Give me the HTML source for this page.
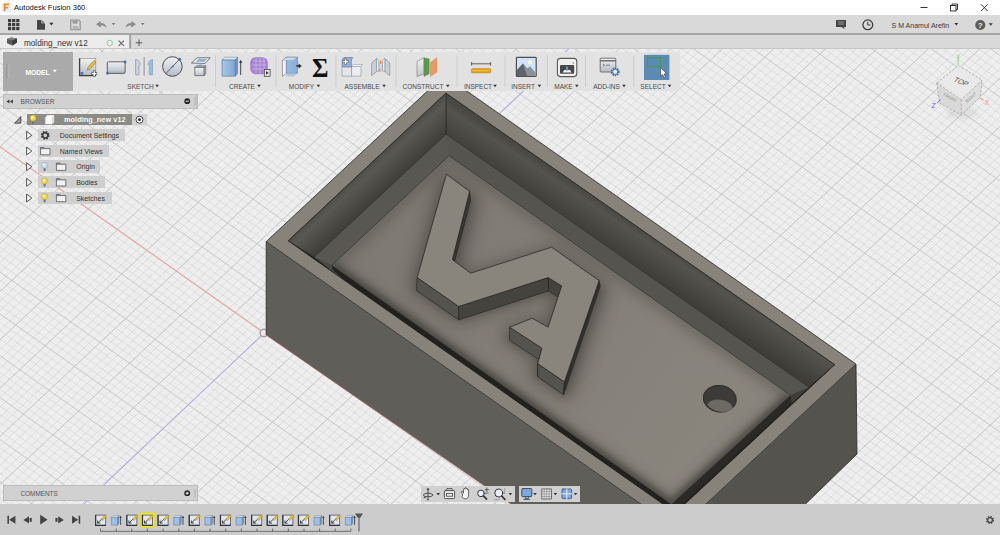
<!DOCTYPE html>
<html>
<head>
<meta charset="utf-8">
<title>Autodesk Fusion 360</title>
<style>
html,body{margin:0;padding:0;}
body{width:1000px;height:535px;overflow:hidden;position:relative;background:#ededed;font-family:"Liberation Sans",sans-serif;}
.abs{position:absolute;}
#titlebar{left:0;top:0;width:1000px;height:15px;background:#ffffff;}
#titletext{left:14px;top:2.400px;font-size:7.6px;color:#111;white-space:nowrap;line-height:11px;}
#qat{left:0;top:15px;width:1000px;height:19px;background:#d9d9d9;}
#qatline{left:0;top:33.4px;width:1000px;height:1.4px;background:#a6a6a6;}
#tabrow{left:0;top:34.8px;width:1000px;height:13.4px;background:#d9d9d9;}
#tabactive{left:0;top:34.8px;width:129px;height:13.4px;background:#ececec;}
#tabline{left:0;top:48px;width:1000px;height:1px;background:#c6c6c6;}
#tabtext{left:24px;top:38px;font-size:8.2px;color:#333;white-space:nowrap;line-height:11px;}
#canvas{left:0;top:49px;width:1000px;height:455px;overflow:hidden;}
#bottombar{left:0;top:504px;width:1000px;height:31px;background:#cccccc;}
.lbl{font-size:6.5px;color:#4a4a4a;white-space:nowrap;line-height:8px;transform:translateX(-50%);margin-top:0.8px;}
.tree{font-size:7px;color:#333;white-space:nowrap;line-height:13.400px;height:12.400px;background:#cfcfcf;margin-top:-0.2px;}
</style>
</head>
<body>
<!-- ===== canvas (grid + model) ===== -->
<div id="canvas" class="abs">
<svg class="abs" style="left:0;top:-49px" width="1000" height="535" viewBox="0 0 1000 535">
<defs>
  <pattern id="minor" width="1" height="1" patternUnits="userSpaceOnUse" patternTransform="matrix(5.1 -4.78 5.88 4.14 264 333)">
    <path d="M0 0H1M0 0V1" stroke="#cacaca" stroke-width="0.105" fill="none"/>
  </pattern>
  <pattern id="major" width="1" height="1" patternUnits="userSpaceOnUse" patternTransform="matrix(25.5 -23.9 29.4 20.7 264 333)">
    <path d="M0 0H1M0 0V1" stroke="#b9bcbc" stroke-width="0.027" fill="none"/>
  </pattern>
  <linearGradient id="farwall" gradientUnits="userSpaceOnUse" x1="640" y1="228" x2="620" y2="258">
    <stop offset="0" stop-color="#4a4843"/><stop offset="0.2" stop-color="#55534d"/><stop offset="1" stop-color="#3e3c38"/>
  </linearGradient>
  <linearGradient id="leftwall" gradientUnits="userSpaceOnUse" x1="360" y1="170" x2="385" y2="197">
    <stop offset="0" stop-color="#4b4944"/><stop offset="0.25" stop-color="#5a5852"/><stop offset="1" stop-color="#3a3935"/>
  </linearGradient>
  <linearGradient id="plateg" gradientUnits="userSpaceOnUse" x1="390" y1="210" x2="700" y2="428"><stop offset="0" stop-color="#7e7972"/><stop offset="0.5" stop-color="#837e77"/><stop offset="1" stop-color="#89847c"/></linearGradient>
  <filter id="blur6" x="-20%" y="-20%" width="140%" height="140%"><feGaussianBlur stdDeviation="6"/></filter>
  <filter id="blur8" x="-30%" y="-30%" width="160%" height="160%"><feGaussianBlur stdDeviation="8"/></filter>
  <filter id="blur5" x="-20%" y="-20%" width="140%" height="140%"><feGaussianBlur stdDeviation="4.5"/></filter>
  <filter id="blur3" x="-20%" y="-20%" width="140%" height="140%"><feGaussianBlur stdDeviation="3"/></filter>
  <clipPath id="plateclip"><polygon points="449.1,155.7 790.5,395.3 671.4,504.2 331.9,265.2"/></clipPath>
</defs>
<rect x="0" y="49" width="1000" height="455" fill="#eeeeee"/>
<rect x="0" y="49" width="1000" height="455" fill="url(#minor)"/>
<rect x="0" y="49" width="1000" height="455" fill="url(#major)"/>
<!-- axes -->
<line x1="0" y1="147" x2="264" y2="333" stroke="#ee9c96" stroke-width="1"/>
<line x1="84" y1="504" x2="264" y2="333" stroke="#a9a6ee" stroke-width="1"/>
<line x1="497" y1="116" x2="570" y2="48" stroke="#a9a6ee" stroke-width="1"/>
<circle cx="263.800" cy="333" r="3.800" fill="#e9e9e9" stroke="#a2a2a2" stroke-width="1.500"/>

<!-- ===== model ===== -->
<g stroke-linejoin="round">
<!-- outer faces -->
<polygon points="266.2,241.6 678,530 683,623 266.2,335" fill="#5f5e58"/>
<polygon points="678,530 856,364.1 857,454 683,623" fill="#54534d"/>
<line x1="266.2" y1="335" x2="511" y2="504" stroke="#9c5a50" stroke-width="0.700"/>
<!-- rim -->
<polygon points="444.3,75.3 856,364.1 678,530 266.2,241.6" fill="#87827a" stroke="#2b2a27" stroke-width="0.8"/>
<!-- inner base (floor / groove) -->
<polygon points="445.9,93.2 834.6,364.7 675.4,512.8 288.2,240.8" fill="#22211e" stroke="#2b2a27" stroke-width="0.8"/>
<!-- floor -->
<polygon points="446.1,134.4 808.7,387.6 675.4,512.8 314.4,257.3" fill="#5b5953"/>
<!-- groove shadows near side -->
<polygon points="331.9,265.2 671.4,504.2 790.5,395.3 808.7,387.6 834.6,364.7 675.4,512.8 288.2,240.8 314.4,257.3" fill="#22211e"/>
<polygon points="314.4,257.3 331.9,265.2 332.4,269.6 346,282 " fill="#4b4944"/>
<!-- inner walls -->
<polygon points="445.9,93.2 834.6,364.7 808.7,387.6 446.1,134.4" fill="url(#farwall)" stroke="#2b2a27" stroke-width="0.7"/>
<polygon points="445.9,93.2 446.1,134.4 314.4,257.3 288.2,240.8" fill="url(#leftwall)" stroke="#2b2a27" stroke-width="0.7"/>
<!-- floor strips (visible) -->
<polygon points="446.1,134.4 808.7,387.6 790.5,395.3 449.1,155.7" fill="#56544e"/>
<polygon points="446.1,134.4 449.1,155.7 331.9,265.2 314.4,257.3" fill="#595751"/>
<polygon points="790.5,395.3 808.7,387.6 792,403 791.3,403.6" fill="#3f3d39"/>
<!-- plate side (right/near-short) -->
<polygon points="790.5,395.3 791.3,403.6 676,510 671.4,504.2" fill="#2a2925"/>
<!-- plate top -->
<polygon points="449.1,155.7 790.5,395.3 671.4,504.2 331.9,265.2" fill="url(#plateg)" stroke="#2b2a27" stroke-width="0.7"/>
<g clip-path="url(#plateclip)">
  <!-- ambient occlusion -->
  <polygon points="449.1,155.7 790.5,395.3 671.4,504.2 331.9,265.2" fill="none" stroke="#55534e" stroke-width="12" filter="url(#blur6)" opacity="0.55"/>
  <path d="M331.9 265.2L671.4 504.2L790.5 395.3" fill="none" stroke="#3a3935" stroke-width="7" filter="url(#blur3)" opacity="0.75"/>
  <polygon points="446.4,174.2 469.6,191.4 452.4,259.7 470.7,273.2 551.6,247.2 599.1,280.6 564.4,381.9 537.7,363.6 541.9,348.2 509.6,327.2 532.1,318.2 548.1,327.2 561.7,285.9 548.2,277.6 458.7,306.4 417.2,277.6" fill="#3f3d39" stroke="#3f3d39" stroke-width="18" filter="url(#blur8)" opacity="0.5" transform="translate(1,8)"/>
  <polygon points="446.4,174.2 469.6,191.4 452.4,259.7 470.7,273.2 551.6,247.2 599.1,280.6 564.4,381.9 537.7,363.6 541.9,348.2 509.6,327.2 532.1,318.2 548.1,327.2 561.7,285.9 548.2,277.6 458.7,306.4 417.2,277.6" fill="#3f3d39" stroke="#3f3d39" stroke-width="5" filter="url(#blur3)" opacity="0.35" transform="translate(0,11)"/>
  
</g>
<!-- hole -->
<g>
  <ellipse cx="719.8" cy="398.7" rx="16.6" ry="13.4" fill="#3d3b37" stroke="#24231f" stroke-width="0.8" transform="rotate(8 719.8 398.7)"/>
  <clipPath id="holeclip"><ellipse cx="719.8" cy="398.7" rx="16.2" ry="13" transform="rotate(8 719.8 398.7)"/></clipPath>
  <ellipse cx="720" cy="406.8" rx="12.6" ry="7.2" fill="#6c6a63" clip-path="url(#holeclip)" transform="rotate(6 720 406)"/>
</g>
<!-- logo side faces -->
<g fill="#3e3c37" stroke="#23221f" stroke-width="0.6">
  <polygon points="417.2,277.6 458.7,306.4 458.7,319.9 416.5,290.4" fill="#55534d"/>
  <polygon points="458.7,306.4 548.2,277.6 548.6,290.9 458.7,319.9" fill="#45433e"/>
  <polygon points="548.2,277.6 561.7,285.9 561.7,299.2 548.6,290.9" fill="#45433e"/>
  <polygon points="509.6,327.2 541.9,348.2 541.9,361.4 509.6,340.3" fill="#55534d"/>
  <polygon points="541.9,348.2 537.7,363.6 537.7,376.8 541.9,361.4" fill="#3a3834"/>
  <polygon points="537.7,363.6 564.4,381.9 563.6,394.8 537.7,376.8" fill="#55534d"/>
  <polygon points="564.4,381.9 599.1,280.6 600.3,286 563.6,394.8" fill="#33312d"/>
  <polygon points="469.6,191.4 452.4,259.7 453.4,266 470.6,200.4" fill="#3a3834"/>
</g>
<!-- logo top -->
<polygon points="446.4,174.2 469.6,191.4 452.4,259.7 470.7,273.2 551.6,247.2 599.1,280.6 564.4,381.9 537.7,363.6 541.9,348.2 509.6,327.2 532.1,318.2 548.1,327.2 561.7,285.9 548.2,277.6 458.7,306.4 417.2,277.6" fill="#89847c" stroke="#23221f" stroke-width="0.7"/>
<!-- outer silhouette edges -->
<polyline points="266.2,241.6 266.2,335" fill="none" stroke="#2b2a27" stroke-width="0.8"/>
<polyline points="856,364.1 857,454 805.6,504" fill="none" stroke="#2b2a27" stroke-width="0.8"/>
</g>
</svg>
</div>

<!-- ===== chrome ===== -->
<div id="titlebar" class="abs"></div>
<div id="titletext" class="abs">Autodesk Fusion 360</div>
<div id="qat" class="abs"></div>
<div id="qatline" class="abs"></div>
<div id="tabrow" class="abs"></div>
<div id="tabactive" class="abs"></div>
<div id="tabline" class="abs"></div>
<div id="tabtext" class="abs">molding_new v12</div>
<div id="bottombar" class="abs"></div>

<!-- ===== ribbon ===== -->
<div class="abs" style="left:3px;top:51.5px;width:677px;height:39px;background:#e2e2e2;"></div>
<div class="abs" style="left:3px;top:51.5px;width:70px;height:39px;background:#aaaaaa;"></div>
<div class="abs" style="left:25.5px;top:68.8px;font-size:6.7px;font-weight:bold;color:#fff;line-height:8px;white-space:nowrap;">MODEL</div>
<div class="abs lbl" style="left:140.5px;top:82px;">SKETCH</div>
<div class="abs lbl" style="left:242px;top:82px;">CREATE</div>
<div class="abs lbl" style="left:301.5px;top:82px;">MODIFY</div>
<div class="abs lbl" style="left:362px;top:82px;">ASSEMBLE</div>
<div class="abs lbl" style="left:423px;top:82px;">CONSTRUCT</div>
<div class="abs lbl" style="left:478px;top:82px;">INSPECT</div>
<div class="abs lbl" style="left:523px;top:82px;">INSERT</div>
<div class="abs lbl" style="left:563.5px;top:82px;">MAKE</div>
<div class="abs lbl" style="left:606.5px;top:82px;">ADD-INS</div>
<div class="abs lbl" style="left:653px;top:82px;">SELECT</div>

<!-- ===== browser panel ===== -->
<div class="abs" style="left:3px;top:94.3px;width:194.5px;height:14.6px;background:#d1d1d1;border:1px solid #bdbdbd;box-sizing:border-box;"></div>
<div class="abs" style="left:20.5px;top:97.5px;font-size:6.6px;color:#555;line-height:8px;white-space:nowrap;">BROWSER</div>
<div class="abs" style="left:27px;top:114px;width:105px;height:11.400px;background:#8b8a84;"></div>
<div class="abs" style="left:64px;top:115px;font-size:7.4px;font-weight:bold;color:#fff;line-height:9px;white-space:nowrap;">molding_new v12</div>
<div class="abs tree" style="left:38px;top:129px;width:87px;"><span style="margin-left:21.800px">Document Settings</span></div>
<div class="abs tree" style="left:38px;top:145px;width:71px;"><span style="margin-left:21.800px">Named Views</span></div>
<div class="abs tree" style="left:38px;top:160.5px;width:62px;"><span style="margin-left:38.200px">Origin</span></div>
<div class="abs tree" style="left:38px;top:176px;width:67px;"><span style="margin-left:38.200px">Bodies</span></div>
<div class="abs tree" style="left:38px;top:192px;width:74px;"><span style="margin-left:38.200px">Sketches</span></div>

<!-- ===== comments ===== -->
<div class="abs" style="left:3px;top:485.4px;width:194.5px;height:15.6px;background:#d1d1d1;border:1px solid #bdbdbd;box-sizing:border-box;"></div>
<div class="abs" style="left:20.5px;top:489.5px;font-size:6.4px;color:#555;line-height:8px;white-space:nowrap;">COMMENTS</div>

<!-- ===== nav bar ===== -->
<div class="abs" style="left:421px;top:486px;width:94px;height:15.5px;background:#d0d0d0;"></div>
<div class="abs" style="left:519px;top:486px;width:61px;height:15.5px;background:#d0d0d0;"></div>

<!-- user -->
<div class="abs" style="left:891.6px;top:20.5px;font-size:7px;color:#3a3a3a;line-height:9px;white-space:nowrap;">S M Anamul Arefin</div>

<!-- ===== icon overlay ===== -->
<svg id="icons" class="abs" style="left:0;top:0" width="1000" height="535" viewBox="0 0 1000 535">

<!-- app icon -->
<rect x="2" y="2.5" width="9" height="10" rx="1.5" fill="#e4eef7"/>
<path d="M4.6 11V4.4h4.4M4.6 7.6h3.2" stroke="#f08a1d" stroke-width="1.7" fill="none"/>
<!-- window controls -->
<path d="M920.5 7.5h7" stroke="#222" stroke-width="0.9"/>
<rect x="950.5" y="5.5" width="5.5" height="5.5" fill="none" stroke="#222" stroke-width="0.9"/>
<path d="M952 5.5V4h5.5v5.5H956" fill="none" stroke="#222" stroke-width="0.9"/>
<path d="M981.100 4.400l6.600 6.600M987.700 4.400l-6.600 6.600" stroke="#222" stroke-width="0.900"/>
<!-- QAT: grid -->
<g fill="#3b3b3b">
<rect x="8" y="19" width="3.2" height="3.2"/><rect x="12.1" y="19" width="3.2" height="3.2"/><rect x="16.2" y="19" width="3.2" height="3.2"/>
<rect x="8" y="23" width="3.2" height="3.2"/><rect x="12.1" y="23" width="3.2" height="3.2"/><rect x="16.2" y="23" width="3.2" height="3.2"/>
<rect x="8" y="27" width="3.2" height="3.2"/><rect x="12.1" y="27" width="3.2" height="3.2"/><rect x="16.2" y="27" width="3.2" height="3.2"/>
</g>
<!-- file -->
<path d="M37 20h4.5l3.5 3.2V29.7H37z" fill="#454545"/>
<path d="M41.7 20v3h3.3" fill="none" stroke="#dadada" stroke-width="0.7"/>
<path d="M49.3 22.8h4.2l-2.1 2.6z" fill="#333"/>
<!-- save -->
<path d="M70.7 20.2h8.3l1.2 1.2v8.2h-9.5z" fill="none" stroke="#9a9a9a" stroke-width="1.3"/>
<rect x="72.6" y="20.4" width="5" height="3.2" fill="#9a9a9a"/>
<rect x="72.8" y="26" width="5.4" height="3.4" fill="#b5b5b5"/>
<!-- undo / redo -->
<path d="M96 24.3l4.6-3.3v2c3.5 0 5.6 1.6 5.9 5-1.4-1.9-3-2.5-5.9-2.5v2.1z" fill="#8a8a8a"/>
<path d="M111.7 22.9h3.6l-1.8 2.3z" fill="#777"/>
<path d="M136 24.3l-4.6-3.3v2c-3.5 0-5.6 1.6-5.9 5 1.4-1.9 3-2.5 5.9-2.5v2.1z" fill="#8a8a8a"/>
<path d="M140.9 22.9h3.6l-1.8 2.3z" fill="#777"/>
<!-- chat -->
<path d="M836 20h10v7h-2.2l1 2.2-3.4-2.2H836z" fill="#444"/>
<path d="M838 22h6M838 24h6" stroke="#bbb" stroke-width="0.7"/>
<!-- clock -->
<circle cx="867.800" cy="24.800" r="4.900" fill="none" stroke="#3d3d3d" stroke-width="1.300"/>
<path d="M867.800 21.800v3.200h2.600" fill="none" stroke="#3d3d3d" stroke-width="1"/>
<path d="M954.3 23h3.9l-1.95 2.5z" fill="#333"/>
<!-- help -->
<circle cx="980.300" cy="25" r="5.100" fill="#5c5c5c"/>
<text x="980.300" y="27.900" font-family="Liberation Sans" font-weight="bold" font-size="8" fill="#f2f2f2" text-anchor="middle">?</text>
<path d="M988.8 23.2h3.9l-1.95 2.5z" fill="#333"/>
<!-- tab: cube icon -->
<path d="M7 39l4.2-1.6 5.8 1.2v4l-4.6 2.8L7 43.2z" fill="#5a5a5a"/>
<path d="M7 39l5.4 1.5 4.6-1.9-5.8-1.2z" fill="#7d7d7d"/>
<path d="M12.4 40.5v4.9l4.6-2.8v-4z" fill="#3c3c3c"/>
<circle cx="109.700" cy="43" r="2.800" fill="none" stroke="#8cc9a0" stroke-width="0.900"/>
<path d="M118.7 40.6l5.2 5.2M123.9 40.6l-5.2 5.2" stroke="#666" stroke-width="1.1"/>
<path d="M130.2 34.5v14" stroke="#9c9c9c" stroke-width="1.8"/>
<path d="M135.7 42.8h6.6M139 39.5v6.6" stroke="#555" stroke-width="1"/>

<defs>
<linearGradient id="gSk" x1="0" y1="0" x2="0" y2="1"><stop offset="0" stop-color="#f1f1f1"/><stop offset="1" stop-color="#b4bcc8"/></linearGradient>
<linearGradient id="gBlue" x1="0" y1="0" x2="1" y2="0"><stop offset="0" stop-color="#a9c8e8"/><stop offset="1" stop-color="#7fa6d2"/></linearGradient>
<linearGradient id="gGray" x1="0" y1="0" x2="0" y2="1"><stop offset="0" stop-color="#f4f4f4"/><stop offset="1" stop-color="#bfc4cb"/></linearGradient>
</defs>
<!-- MODEL grip + arrow -->
<path d="M6.900 64v14.500" stroke="#8f8f8f" stroke-width="0.700"/><path d="M9.100 64v14.500" stroke="#c2c2c2" stroke-width="0.700"/>
<path d="M52.800 69.800h4l-2 2.600z" fill="#fff"/>
<!-- separators -->
<path d="M215.5 55.500v31.500M276 55.500v31.500M336 55.500v31.500M396 55.500v31.500M457 55.500v31.500M505 55.500v31.500M547.300 55.500v31.500M585.500 55.500v31.500M633.800 55.500v31.500" stroke="#cdcdcd" stroke-width="1"/>
<!-- label arrows -->
<g fill="#333">
<path d="M155.3 84.8h3.6l-1.8 2.4z"/><path d="M257.2 84.8h3.6l-1.8 2.4z"/><path d="M316.6 84.8h3.6l-1.8 2.4z"/><path d="M382.3 84.8h3.6l-1.8 2.4z"/>
<path d="M446 84.8h3.6l-1.8 2.4z"/><path d="M493.2 84.8h3.6l-1.8 2.4z"/><path d="M537.6 84.8h3.6l-1.8 2.4z"/><path d="M575 84.8h3.6l-1.8 2.4z"/>
<path d="M622.2 84.8h3.6l-1.8 2.4z"/><path d="M667.7 84.8h3.6l-1.8 2.4z"/>
</g>
<!-- 1 create sketch -->
<rect x="79.6" y="58.6" width="16.2" height="16.6" fill="url(#gSk)" stroke="#8a8a8a" stroke-width="0.6"/>
<path d="M79.6 58.4V75.6H96" fill="none" stroke="#3e3e3e" stroke-width="1.3"/>
<rect x="80.6" y="72" width="2.6" height="2.6" fill="#4a76ae"/>
<path d="M88 67.5l6-7 2 1.7-6 7-2.6 0.9z" fill="#f2c230" stroke="#6b5a2a" stroke-width="0.5"/>
<path d="M94.2 70.6v6M91.2 73.6h6" stroke="#555" stroke-width="2.6"/>
<path d="M94.2 71.2v4.8M91.8 73.6h4.8" stroke="#fff" stroke-width="1.3"/>
<!-- 2 rectangle -->
<rect x="107.3" y="61.8" width="17.8" height="11.6" rx="1" fill="url(#gSk)" stroke="#555" stroke-width="0.9"/>
<path d="M108.5 72h15.5" stroke="#7d95b8" stroke-width="0.5" stroke-dasharray="1 0.6"/>
<circle cx="125" cy="62" r="1.4" fill="#3f6ea9"/><circle cx="107.5" cy="73.3" r="1.4" fill="#3f6ea9"/>
<!-- 3 mirror -->
<path d="M144.1 57v18.8" stroke="#7a7a7a" stroke-width="0.8"/>
<path d="M135.6 59.4c3 .4 4.6 2.8 4.6 5.2l-1.2 1.2v9h-3.4z" fill="#cdd3db" stroke="#8a929d" stroke-width="0.700"/>
<path d="M152.6 59.4c-3 .4-4.6 2.8-4.6 5.2l1.2 1.2v9h3.4z" fill="#9dbbe0" stroke="#7f9cc2" stroke-width="0.6"/>
<!-- 4 circle -->
<circle cx="172.4" cy="66.5" r="9.8" fill="url(#gSk)" stroke="#4a4a4a" stroke-width="1"/>
<path d="M166 73.4L179.4 59.4" stroke="#444" stroke-width="0.8"/>
<circle cx="179.6" cy="59.3" r="1.5" fill="#3f6ea9"/><circle cx="172.6" cy="66.4" r="1" fill="#3f6ea9"/>
<!-- 5 project -->
<path d="M191.4 63l5.8-5.2h13l-5.2 5.7z" fill="#f2f2f2" stroke="#555" stroke-width="0.8"/>
<path d="M195.6 61.8l3-2.8h8.4l-2.8 3z" fill="#8db1dc"/>
<path d="M200.3 63.5v3" stroke="#8db1dc" stroke-width="3" opacity="0.6"/>
<path d="M194.8 67.4l2-1.6h9l-1.6 1.6z" fill="#a9c5e6" stroke="#555" stroke-width="0.6"/>
<path d="M194.8 67.4h9.4v8.2h-9.4z" fill="url(#gGray)" stroke="#555" stroke-width="0.7"/>
<path d="M204.2 67.4l1.6-1.6v8l-1.6 1.8z" fill="#b7bcc4" stroke="#555" stroke-width="0.6"/>
<!-- 6 extrude -->
<path d="M222 60l2.4-2.8h13.2l-2.2 2.8z" fill="#dfe9f4" stroke="#6a7a8e" stroke-width="0.5"/>
<path d="M222 60h13.4v16.2H222z" fill="url(#gBlue)" stroke="#5d6f86" stroke-width="0.6"/>
<path d="M235.4 60l2.2-2.8v16l-2.2 3z" fill="#6e95c4" stroke="#5d6f86" stroke-width="0.5"/>
<path d="M240.7 75V61.5" stroke="#333" stroke-width="0.9"/><path d="M239 62.8l1.7-3 1.7 3z" fill="#333"/>
<!-- 7 form -->
<rect x="250.2" y="57.2" width="17.6" height="17" rx="5.5" fill="#a383cf"/>
<path d="M253 61h12M252 65h14M252 69h14M256 58v15M260 58v16M264 58v15" stroke="#c9b5e6" stroke-width="0.9"/>
<rect x="264.3" y="69.5" width="5.8" height="6.8" fill="#e8e8e8" stroke="#444" stroke-width="0.8"/>
<path d="M266 71l2.6 1.9-2.6 1.9z" fill="#333"/>
<!-- 8 press pull -->
<path d="M282.4 60.5l4-3.3v16l-4 3.3z" fill="#f3f3f3" stroke="#666" stroke-width="0.6"/>
<path d="M286.4 57.2h11v16h-11z" fill="url(#gBlue)" stroke="#5d6f86" stroke-width="0.6"/>
<path d="M282.4 60.5l4-3.3h11l-3.6 3.3z" fill="#dfe9f4" stroke="#6a7a8e" stroke-width="0.4" opacity="0.7"/>
<path d="M286.6 60.5v16h7.2l3.6-3.3v-16l-3.6 3.3z" fill="#8fb3dd" opacity="0.6"/>
<path d="M296.4 65.9h3" stroke="#2c2c2c" stroke-width="1.6"/><path d="M298.6 63.4l3.2 2.5-3.2 2.5z" fill="#2c2c2c"/>
<!-- 9 sigma -->
<text x="320.200" y="77" font-family="Liberation Serif" font-weight="bold" font-size="28" fill="#111" text-anchor="middle" textLength="16.500" lengthAdjust="spacingAndGlyphs">Σ</text>
<!-- 10 new component -->
<path d="M342 66.5h9.6v9.6H342z" fill="#e4e6ea" stroke="#8a8f98" stroke-width="0.6"/>
<path d="M351.6 66.5h9.4v9.6h-9.4z" fill="#eceef1" stroke="#8a8f98" stroke-width="0.6"/>
<path d="M351.6 66.5l1.6-2h9.2l-1.4 2z" fill="#f6f6f6" stroke="#8a8f98" stroke-width="0.5"/>
<path d="M342.2 59.6l1.6-2h9l-1.4 2v7.4h-9.2z" fill="#8fb3dd" stroke="#5d6f86" stroke-width="0.6"/>
<path d="M345.6 58.6v6M342.6 61.6h6" stroke="#666" stroke-width="2.5"/><path d="M345.6 59.2v4.8M343.2 61.6h4.8" stroke="#fff" stroke-width="1.3"/>
<!-- 11 joint -->
<path d="M371.6 63l5-4.4v13l-5 4z" fill="#c9ced6" stroke="#7c838d" stroke-width="0.6"/>
<path d="M376.6 58.6l2.2 1.4v11l-2.2 0.6z" fill="#eef0f2" stroke="#7c838d" stroke-width="0.5"/>
<path d="M389.8 63l-5-4.4v13l5 4z" fill="#c9ced6" stroke="#7c838d" stroke-width="0.6"/>
<path d="M384.8 58.6l-2.2 1.4v11l2.2 0.6z" fill="#eef0f2" stroke="#7c838d" stroke-width="0.5"/>
<path d="M379.4 62.2h2.6v9h-2.6z" fill="#dfe2e6" stroke="#8a8f98" stroke-width="0.4"/>
<path d="M380.7 60.4v3.4M379.6 68.6v3" stroke="#ee8a2e" stroke-width="1.2"/>
<!-- 12 construct -->
<path d="M417 61.4l7-3.6v16l-7 2.8z" fill="url(#gGray)" stroke="#777" stroke-width="0.6"/>
<path d="M424 57.8l5.2 1.2v14.8l-5.2 2.6z" fill="#5b9a4a" stroke="#4b7a3f" stroke-width="0.4"/>
<path d="M430.4 62.6l6.4-4.8v14.4l-6.4 4.4z" fill="#ea9a62" stroke="#c47a44" stroke-width="0.4"/>
<!-- 13 inspect -->
<path d="M471.6 63.8h19M471.6 62v3.6M490.6 62v3.6" stroke="#555" stroke-width="0.9" fill="none"/>
<rect x="471.4" y="68.6" width="19.4" height="4.3" rx="1" fill="#e7a61f" stroke="#b27c12" stroke-width="0.5"/>
<path d="M473 70.6h16" stroke="#f8dc7a" stroke-width="0.8" stroke-dasharray="0.8 0.8"/>
<!-- 14 insert -->
<rect x="516.4" y="57.3" width="19.8" height="19.2" rx="0.8" fill="#cfe4f6" stroke="#4f4f4f" stroke-width="1.2"/>
<circle cx="530" cy="62.2" r="2" fill="#fdf6cf"/>
<path d="M517 76v-6l6-6.4 4.4 5 2.6-2.4 5.6 6.6v3.2z" fill="#8b9099"/>
<path d="M517 76v-6l6-6.4 4 12.4z" fill="#5f646c"/>
<!-- 15 make -->
<rect x="557.4" y="58.4" width="19.4" height="18.2" rx="3" fill="#efefef" stroke="#5a5a5a" stroke-width="1.1"/>
<rect x="560" y="65" width="14.2" height="8.8" rx="1" fill="#484848"/>
<path d="M562.6 72.6l1.6-2.6h5.8l1.6 2.6z" fill="#f0f0f0"/>
<path d="M566 66.4h2v3l1 0-2 1.6-2-1.6 1 0z" fill="#5f96d6"/>
<circle cx="573.3" cy="63" r="0.8" fill="#4caa3e"/>
<!-- 16 add-ins -->
<rect x="600.2" y="58.2" width="15.6" height="13.8" rx="0.8" fill="url(#gSk)" stroke="#666" stroke-width="0.9"/>
<path d="M600.2 60.8h15.6" stroke="#666" stroke-width="1.4"/>
<path d="M603 64l1.6 1.2-1.6 1.2M606 65.2h4" stroke="#555" stroke-width="0.7" fill="none"/>
<circle cx="615.2" cy="71.8" r="3.6" fill="#e9eef5" stroke="#3b6ca6" stroke-width="1.7" stroke-dasharray="1.5 0.8"/>
<circle cx="615.2" cy="71.8" r="2.6" fill="none" stroke="#3b6ca6" stroke-width="1"/>
<!-- 17 select -->
<rect x="644" y="54.8" width="25.4" height="25.2" fill="#5b8ab5"/>
<rect x="647.6" y="57.8" width="13" height="8.6" fill="none" stroke="#4c9a3a" stroke-width="1"/>
<path d="M660.6 67.6v8.8l2-1.8 1.5 3.2 1.4-.7-1.5-3.1 2.7-.2z" fill="#fff" stroke="#333" stroke-width="0.6"/>
<defs><filter id="vcblur" x="-50%" y="-50%" width="200%" height="200%"><feGaussianBlur stdDeviation="2.5"/></filter></defs>
<path d="M9.4 99.4l-2.8 2 2.8 2zM12.8 99.4l-2.8 2 2.8 2z" fill="#333"/>
<circle cx="187.2" cy="101.2" r="2.9" fill="#222"/><path d="M185.6 101.2h3.2" stroke="#fff" stroke-width="0.9"/>
<path d="M195 97v8.6" stroke="#aaa" stroke-width="0.8"/><path d="M196.5 94.5v13.5" stroke="#bdbdbd" stroke-width="0.8"/>
<circle cx="187.2" cy="493.2" r="2.9" fill="#222"/><path d="M185.6 493.2h3.2M187.2 491.6v3.2" stroke="#fff" stroke-width="0.9"/>
<path d="M195 489v8.6" stroke="#aaa" stroke-width="0.8"/>
<path d="M14.6 123.2h6.2v-6.6z" fill="#9a9a9a" stroke="#333" stroke-width="0.8" stroke-linejoin="round"/>
<rect x="132" y="114" width="15.200" height="11.400" fill="#d2d2d2"/>
<path d="M28 115.400h104M28 117.400h104M28 119.400h104M28 121.400h104M28 123.400h104" stroke="#9c9b96" stroke-width="0.6" stroke-dasharray="0.8 1.2" opacity="0.6"/>
<g transform="translate(33,119.5)"><circle cx="0" cy="-1.4" r="3" fill="#f5dc3c" stroke="#b89a20" stroke-width="0.5"/><circle cx="-0.8" cy="-2.2" r="1.2" fill="#fff" opacity="0.75"/><path d="M-1.4 1.5h2.8v1.6h-2.8z" fill="#8a8a8a"/><path d="M-0.9 3.1h1.8v1h-1.8z" fill="#555"/></g>
<g><path d="M45.4 117.4l2-1.8h6.6v6.6l-2 1.8h-6.6z" fill="#fafafa" stroke="#e5e5e5" stroke-width="0.5"/><path d="M52 117.4l2-1.8v6.6l-2 1.8z" fill="#d9d9d9"/><path d="M45.4 117.4h6.6l2-1.8h-6.6z" fill="#fff"/></g>
<circle cx="139.5" cy="119.7" r="3.5" fill="#fff" stroke="#333" stroke-width="0.9"/><circle cx="139.5" cy="119.7" r="1.4" fill="#222"/>
<path d="M26.6 131.3l5.2 4-5.2 4z" fill="#f3f3f3" stroke="#444" stroke-width="0.9" stroke-linejoin="round"/>
<path d="M26.6 147l5.2 4-5.2 4z" fill="#f3f3f3" stroke="#444" stroke-width="0.9" stroke-linejoin="round"/>
<path d="M26.6 162.7l5.2 4-5.2 4z" fill="#f3f3f3" stroke="#444" stroke-width="0.9" stroke-linejoin="round"/>
<path d="M26.6 178.3l5.2 4-5.2 4z" fill="#f3f3f3" stroke="#444" stroke-width="0.9" stroke-linejoin="round"/>
<path d="M26.6 194l5.2 4-5.2 4z" fill="#f3f3f3" stroke="#444" stroke-width="0.9" stroke-linejoin="round"/>
<g transform="translate(45.2,135.3)"><circle r="3.3" fill="none" stroke="#3c3c3c" stroke-width="2.2" stroke-dasharray="1.5 1.09"/><circle r="2.6" fill="none" stroke="#3c3c3c" stroke-width="1.5"/><circle r="1.2" fill="#cfcfcf"/></g>
<g transform="translate(40.6,146.4)"><path d="M0 1.2h3.4l0.8 1h5.2v6.2H0z" fill="#f1f1f1" stroke="#555" stroke-width="0.8"/><path d="M0 1.2h3.4l0.8 1.2H0z" fill="#8aa6cc" stroke="#555" stroke-width="0.5"/></g>
<g transform="translate(44.6,166.8)"><circle cx="0" cy="-1.4" r="3" fill="#c8def5" stroke="#7f9cc2" stroke-width="0.5"/><circle cx="-0.8" cy="-2.2" r="1.2" fill="#fff" opacity="0.75"/><path d="M-1.4 1.5h2.8v1.6h-2.8z" fill="#8a8a8a"/><path d="M-0.9 3.1h1.8v1h-1.8z" fill="#555"/></g>
<g transform="translate(56.4,162.0)"><path d="M0 1.2h3.4l0.8 1h5.2v6.2H0z" fill="#f1f1f1" stroke="#555" stroke-width="0.8"/><path d="M0 1.2h3.4l0.8 1.2H0z" fill="#8aa6cc" stroke="#555" stroke-width="0.5"/></g>
<g transform="translate(44.6,182.4)"><circle cx="0" cy="-1.4" r="3" fill="#f5dc3c" stroke="#b89a20" stroke-width="0.5"/><circle cx="-0.8" cy="-2.2" r="1.2" fill="#fff" opacity="0.75"/><path d="M-1.4 1.5h2.8v1.6h-2.8z" fill="#8a8a8a"/><path d="M-0.9 3.1h1.8v1h-1.8z" fill="#555"/></g>
<g transform="translate(56.4,177.6)"><path d="M0 1.2h3.4l0.8 1h5.2v6.2H0z" fill="#f1f1f1" stroke="#555" stroke-width="0.8"/><path d="M0 1.2h3.4l0.8 1.2H0z" fill="#8aa6cc" stroke="#555" stroke-width="0.5"/></g>
<g transform="translate(44.6,198.1)"><circle cx="0" cy="-1.4" r="3" fill="#f5dc3c" stroke="#b89a20" stroke-width="0.5"/><circle cx="-0.8" cy="-2.2" r="1.2" fill="#fff" opacity="0.75"/><path d="M-1.4 1.5h2.8v1.6h-2.8z" fill="#8a8a8a"/><path d="M-0.9 3.1h1.8v1h-1.8z" fill="#555"/></g>
<g transform="translate(56.4,193.3)"><path d="M0 1.2h3.4l0.8 1h5.2v6.2H0z" fill="#f1f1f1" stroke="#555" stroke-width="0.8"/><path d="M0 1.2h3.4l0.8 1.2H0z" fill="#8aa6cc" stroke="#555" stroke-width="0.5"/></g>
<g fill="#444"><path d="M7.4 515.8h1.6v8h-1.6zM15.4 515.8v8l-6.2-4z"/><path d="M29 516.2v7.4l-5.6-3.7zM29.6 518h2.2v3.8h-2.2z"/><path d="M40.2 514.8v9.8l7.4-4.9z"/><path d="M58.2 516.2v7.4l5.6-3.7zM57.6 518h-2.2v3.8h2.2z"/><path d="M78.6 515.8h1.6v8h-1.6zM72 515.8v8l6.2-4z"/></g>
<rect x="140.4" y="512.8" width="14.4" height="14.4" fill="#f1ea3a" stroke="#dcd51a" stroke-width="0.6"/>
<g transform="translate(95.1,514.7)"><rect x="0.4" y="0.4" width="10.200" height="10.200" fill="#dfe7f2" stroke="#555" stroke-width="0.800"/><path d="M0.6 0.2v10.4h10.2" fill="none" stroke="#333" stroke-width="1.2"/><path d="M2.6 8.4l4.6-4.6M2.6 8.4v-2.6M2.6 8.4h2.6" stroke="#333" stroke-width="0.9" fill="none"/><path d="M6 4.6l4.2-4.4 1.4 1.3-4.2 4.4z" fill="#f2c230" stroke="#8a6d1e" stroke-width="0.4"/></g>
<g transform="translate(110.7,514.7)"><path d="M0.6 2.6l1.6-1.8h6l-1.4 1.8z" fill="#e4edf7" stroke="#6a7a8e" stroke-width="0.4"/><path d="M0.6 2.6h6.2v7.8h-6.2z" fill="#9fc0e6" stroke="#5d6f86" stroke-width="0.5"/><path d="M6.8 2.6l1.4-1.8v7.6l-1.4 2z" fill="#7499c8" stroke="#5d6f86" stroke-width="0.4"/><path d="M9.9 10.2v-7.4" stroke="#333" stroke-width="0.8"/><path d="M8.7 3.4l1.2-2.4 1.2 2.4z" fill="#333"/></g>
<g transform="translate(126.3,514.7)"><rect x="0.4" y="0.4" width="10.200" height="10.200" fill="#dfe7f2" stroke="#555" stroke-width="0.800"/><path d="M0.6 0.2v10.4h10.2" fill="none" stroke="#333" stroke-width="1.2"/><path d="M2.6 8.4l4.6-4.6M2.6 8.4v-2.6M2.6 8.4h2.6" stroke="#333" stroke-width="0.9" fill="none"/><path d="M6 4.6l4.2-4.4 1.4 1.3-4.2 4.4z" fill="#f2c230" stroke="#8a6d1e" stroke-width="0.4"/></g>
<g transform="translate(141.9,514.7)"><rect x="0.4" y="0.4" width="10.200" height="10.200" fill="#dfe7f2" stroke="#555" stroke-width="0.800"/><path d="M0.6 0.2v10.4h10.2" fill="none" stroke="#333" stroke-width="1.2"/><path d="M2.6 8.4l4.6-4.6M2.6 8.4v-2.6M2.6 8.4h2.6" stroke="#333" stroke-width="0.9" fill="none"/><path d="M6 4.6l4.2-4.4 1.4 1.3-4.2 4.4z" fill="#f2c230" stroke="#8a6d1e" stroke-width="0.4"/></g>
<g transform="translate(157.5,514.7)"><rect x="0.4" y="0.4" width="10.200" height="10.200" fill="#dfe7f2" stroke="#555" stroke-width="0.800"/><path d="M0.6 0.2v10.4h10.2" fill="none" stroke="#333" stroke-width="1.2"/><path d="M2.6 8.4l4.6-4.6M2.6 8.4v-2.6M2.6 8.4h2.6" stroke="#333" stroke-width="0.9" fill="none"/><path d="M6 4.6l4.2-4.4 1.4 1.3-4.2 4.4z" fill="#f2c230" stroke="#8a6d1e" stroke-width="0.4"/></g>
<g transform="translate(173.1,514.7)"><path d="M0.6 2.6l1.6-1.8h6l-1.4 1.8z" fill="#e4edf7" stroke="#6a7a8e" stroke-width="0.4"/><path d="M0.6 2.6h6.2v7.8h-6.2z" fill="#9fc0e6" stroke="#5d6f86" stroke-width="0.5"/><path d="M6.8 2.6l1.4-1.8v7.6l-1.4 2z" fill="#7499c8" stroke="#5d6f86" stroke-width="0.4"/><path d="M9.9 10.2v-7.4" stroke="#333" stroke-width="0.8"/><path d="M8.7 3.4l1.2-2.4 1.2 2.4z" fill="#333"/></g>
<g transform="translate(188.7,514.7)"><rect x="0.4" y="0.4" width="10.200" height="10.200" fill="#dfe7f2" stroke="#555" stroke-width="0.800"/><path d="M0.6 0.2v10.4h10.2" fill="none" stroke="#333" stroke-width="1.2"/><path d="M2.6 8.4l4.6-4.6M2.6 8.4v-2.6M2.6 8.4h2.6" stroke="#333" stroke-width="0.9" fill="none"/><path d="M6 4.6l4.2-4.4 1.4 1.3-4.2 4.4z" fill="#f2c230" stroke="#8a6d1e" stroke-width="0.4"/></g>
<g transform="translate(204.3,514.7)"><path d="M0.6 2.6l1.6-1.8h6l-1.4 1.8z" fill="#e4edf7" stroke="#6a7a8e" stroke-width="0.4"/><path d="M0.6 2.6h6.2v7.8h-6.2z" fill="#9fc0e6" stroke="#5d6f86" stroke-width="0.5"/><path d="M6.8 2.6l1.4-1.8v7.6l-1.4 2z" fill="#7499c8" stroke="#5d6f86" stroke-width="0.4"/><path d="M9.9 10.2v-7.4" stroke="#333" stroke-width="0.8"/><path d="M8.7 3.4l1.2-2.4 1.2 2.4z" fill="#333"/></g>
<g transform="translate(219.9,514.7)"><rect x="0.4" y="0.4" width="10.200" height="10.200" fill="#dfe7f2" stroke="#555" stroke-width="0.800"/><path d="M0.6 0.2v10.4h10.2" fill="none" stroke="#333" stroke-width="1.2"/><path d="M2.6 8.4l4.6-4.6M2.6 8.4v-2.6M2.6 8.4h2.6" stroke="#333" stroke-width="0.9" fill="none"/><path d="M6 4.6l4.2-4.4 1.4 1.3-4.2 4.4z" fill="#f2c230" stroke="#8a6d1e" stroke-width="0.4"/></g>
<g transform="translate(235.5,514.7)"><path d="M0.6 2.6l1.6-1.8h6l-1.4 1.8z" fill="#e4edf7" stroke="#6a7a8e" stroke-width="0.4"/><path d="M0.6 2.6h6.2v7.8h-6.2z" fill="#9fc0e6" stroke="#5d6f86" stroke-width="0.5"/><path d="M6.8 2.6l1.4-1.8v7.6l-1.4 2z" fill="#7499c8" stroke="#5d6f86" stroke-width="0.4"/><path d="M9.9 10.2v-7.4" stroke="#333" stroke-width="0.8"/><path d="M8.7 3.4l1.2-2.4 1.2 2.4z" fill="#333"/></g>
<g transform="translate(251.1,514.7)"><rect x="0.4" y="0.4" width="10.200" height="10.200" fill="#dfe7f2" stroke="#555" stroke-width="0.800"/><path d="M0.6 0.2v10.4h10.2" fill="none" stroke="#333" stroke-width="1.2"/><path d="M2.6 8.4l4.6-4.6M2.6 8.4v-2.6M2.6 8.4h2.6" stroke="#333" stroke-width="0.9" fill="none"/><path d="M6 4.6l4.2-4.4 1.4 1.3-4.2 4.4z" fill="#f2c230" stroke="#8a6d1e" stroke-width="0.4"/></g>
<g transform="translate(266.7,514.7)"><rect x="0.4" y="0.4" width="10.200" height="10.200" fill="#dfe7f2" stroke="#555" stroke-width="0.800"/><path d="M0.6 0.2v10.4h10.2" fill="none" stroke="#333" stroke-width="1.2"/><path d="M2.6 8.4l4.6-4.6M2.6 8.4v-2.6M2.6 8.4h2.6" stroke="#333" stroke-width="0.9" fill="none"/><path d="M6 4.6l4.2-4.4 1.4 1.3-4.2 4.4z" fill="#f2c230" stroke="#8a6d1e" stroke-width="0.4"/></g>
<g transform="translate(282.3,514.7)"><rect x="0.4" y="0.4" width="10.200" height="10.200" fill="#dfe7f2" stroke="#555" stroke-width="0.800"/><path d="M0.6 0.2v10.4h10.2" fill="none" stroke="#333" stroke-width="1.2"/><path d="M2.6 8.4l4.6-4.6M2.6 8.4v-2.6M2.6 8.4h2.6" stroke="#333" stroke-width="0.9" fill="none"/><path d="M6 4.6l4.2-4.4 1.4 1.3-4.2 4.4z" fill="#f2c230" stroke="#8a6d1e" stroke-width="0.4"/></g>
<g transform="translate(297.9,514.7)"><rect x="0.4" y="0.4" width="10.200" height="10.200" fill="#dfe7f2" stroke="#555" stroke-width="0.800"/><path d="M0.6 0.2v10.4h10.2" fill="none" stroke="#333" stroke-width="1.2"/><path d="M2.6 8.4l4.6-4.6M2.6 8.4v-2.6M2.6 8.4h2.6" stroke="#333" stroke-width="0.9" fill="none"/><path d="M6 4.6l4.2-4.4 1.4 1.3-4.2 4.4z" fill="#f2c230" stroke="#8a6d1e" stroke-width="0.4"/></g>
<g transform="translate(313.5,514.7)"><path d="M0.6 2.6l1.6-1.8h6l-1.4 1.8z" fill="#e4edf7" stroke="#6a7a8e" stroke-width="0.4"/><path d="M0.6 2.6h6.2v7.8h-6.2z" fill="#9fc0e6" stroke="#5d6f86" stroke-width="0.5"/><path d="M6.8 2.6l1.4-1.8v7.6l-1.4 2z" fill="#7499c8" stroke="#5d6f86" stroke-width="0.4"/><path d="M9.9 10.2v-7.4" stroke="#333" stroke-width="0.8"/><path d="M8.7 3.4l1.2-2.4 1.2 2.4z" fill="#333"/></g>
<g transform="translate(329.1,514.7)"><rect x="0.4" y="0.4" width="10.200" height="10.200" fill="#dfe7f2" stroke="#555" stroke-width="0.800"/><path d="M0.6 0.2v10.4h10.2" fill="none" stroke="#333" stroke-width="1.2"/><path d="M2.6 8.4l4.6-4.6M2.6 8.4v-2.6M2.6 8.4h2.6" stroke="#333" stroke-width="0.9" fill="none"/><path d="M6 4.6l4.2-4.4 1.4 1.3-4.2 4.4z" fill="#f2c230" stroke="#8a6d1e" stroke-width="0.4"/></g>
<g transform="translate(344.7,514.7)"><path d="M0.6 2.6l1.6-1.8h6l-1.4 1.8z" fill="#e4edf7" stroke="#6a7a8e" stroke-width="0.4"/><path d="M0.6 2.6h6.2v7.8h-6.2z" fill="#9fc0e6" stroke="#5d6f86" stroke-width="0.5"/><path d="M6.8 2.6l1.4-1.8v7.6l-1.4 2z" fill="#7499c8" stroke="#5d6f86" stroke-width="0.4"/><path d="M9.9 10.2v-7.4" stroke="#333" stroke-width="0.8"/><path d="M8.7 3.4l1.2-2.4 1.2 2.4z" fill="#333"/></g>
<path d="M100.5 531.3H350.9M100.5 531.3v-2.800M116.2 531.3v-2.800M131.8 531.3v-2.800M147.4 531.3v-2.800M163.1 531.3v-2.800M178.8 531.3v-2.800M194.4 531.3v-2.800M210.1 531.3v-2.800M225.7 531.3v-2.800M241.3 531.3v-2.800M257.0 531.3v-2.800M272.6 531.3v-2.800M288.3 531.3v-2.800M304.0 531.3v-2.800M319.6 531.3v-2.800M335.2 531.3v-2.800M350.9 531.3v-2.800" stroke="#555" stroke-width="0.8" fill="none"/>
<path d="M355 513.6h8l-2.8 4.2h-2.4z" fill="#555"/><path d="M359 517v14.5" stroke="#555" stroke-width="1"/>
<g transform="translate(990,520)"><circle r="3.1" fill="none" stroke="#4a4a4a" stroke-width="2" stroke-dasharray="1.4 1.03"/><circle r="2.4" fill="none" stroke="#4a4a4a" stroke-width="1.3"/></g>

<g stroke-linecap="round">
<ellipse cx="428" cy="495" rx="4.6" ry="1.8" fill="none" stroke="#444" stroke-width="0.9"/>
<path d="M428 488.4v9.8" stroke="#444" stroke-width="0.9"/><path d="M426.4 490l1.6-2 1.6 2z" fill="#444"/><path d="M425.4 496.2l-2 1.2 2.2 1z" fill="#444"/><circle cx="428" cy="499.6" r="0.9" fill="#444"/>
<path d="M436.4 493h3.6l-1.8 2.3z" fill="#333" stroke="none"/>
<rect x="444.4" y="490.6" width="10.2" height="8" rx="1" fill="#ececec" stroke="#444" stroke-width="0.9"/><rect x="446.4" y="493.4" width="6.2" height="2.8" fill="none" stroke="#444" stroke-width="0.8"/><path d="M446 490.4l1.4-2M453 490.4l-1.4-2M447.4 488.6h4.2" stroke="#444" stroke-width="0.8" fill="none"/>
<path d="M462.6 494.6l-1.2-2.4c-.4-.9.8-1.4 1.2-.6l.9 1.6v-4c0-.9 1.3-.9 1.3 0v-.8c0-.9 1.3-.9 1.3 0v.6c0-.9 1.3-.9 1.3 0v1c0-.8 1.2-.8 1.2 0v5.200c0 2-1 3.600-3.200 3.600-1.800 0-2.700-1-3.200-2z" fill="#f4f4f4" stroke="#333" stroke-width="0.7"/>
<circle cx="481" cy="493.400" r="3.300" fill="#e9f0f8" stroke="#333" stroke-width="1"/><path d="M483.400 495.900l3.200 3.200" stroke="#333" stroke-width="1.600"/><path d="M486.800 488v3.400M485.100 489.700h3.400M485.400 493h2.800" stroke="#333" stroke-width="0.700"/>
<circle cx="498.800" cy="493" r="4" fill="#e9f0f8" stroke="#333" stroke-width="1"/><path d="M501.700 496l3.200 3.400" stroke="#333" stroke-width="1.700"/><path d="M494.500 499.600h5" stroke="#777" stroke-width="0.600" stroke-dasharray="0.8 0.8"/><path d="M504.600 488.600v5" stroke="#777" stroke-width="0.600" stroke-dasharray="0.8 0.8"/>
<path d="M508.600 493h3.600l-1.800 2.300z" fill="#333" stroke="none"/>
<rect x="521.800" y="488.600" width="10" height="8" rx="0.800" fill="#7fa8dc" stroke="#3b4d66" stroke-width="1"/><path d="M525.300 496.800v1.800h3v-1.800M523.800 499.400h6" stroke="#3b4d66" stroke-width="0.900" fill="none"/>
<path d="M533.200 493h3.600l-1.800 2.300z" fill="#333" stroke="none"/>
<rect x="541.800" y="489" width="9.800" height="10" fill="#e3e3e3" stroke="#555" stroke-width="0.800"/><path d="M544.200 489v10M546.700 489v10M549.200 489v10M541.800 491.500h9.800M541.800 494h9.800M541.800 496.500h9.800" stroke="#777" stroke-width="0.500"/>
<path d="M553.600 493h3.600l-1.800 2.300z" fill="#333" stroke="none"/>
<rect x="562" y="489" width="9.600" height="9.600" rx="0.800" fill="#7fa8dc" stroke="#35609a" stroke-width="0.900"/><path d="M566.800 489v9.600M562 493.800h9.600" stroke="#e8eef7" stroke-width="1"/>
<path d="M573.700 493h3.600l-1.800 2.300z" fill="#333" stroke="none"/>
</g>


<g>
<ellipse cx="962" cy="113" rx="16" ry="6" fill="#000" opacity="0.06" filter="url(#vcblur)"/>
<polygon points="936.8,82.9 958.5,65.4 982.3,80.1 961.3,99.7" fill="#e9e9e9"/>
<polygon points="936.8,82.9 961.3,99.7 961.3,115.1 939.6,103.2" fill="#d9d9d9"/>
<polygon points="961.3,99.7 982.3,80.1 980.2,96.9 961.3,115.1" fill="#dedede"/>
<g fill="none" stroke="#9a9a9a" stroke-width="0.7" stroke-dasharray="2.4 1.6">
<polygon points="936.8,82.9 958.5,65.4 982.3,80.1 961.3,99.7"/>
<path d="M936.8 82.900L939.600 103.200L961.300 115.100L980.200 96.900L982.300 80.100M961.300 99.700V115.100"/>
</g>
<text transform="translate(959.500,83.800) rotate(22) skewX(-18)" font-family="Liberation Sans" font-size="7.200" fill="#5c5c5c" text-anchor="middle">TOP</text>
<text transform="translate(949.500,99) rotate(28) skewX(10)" font-family="Liberation Sans" font-size="4.200" fill="#8a8a8a" text-anchor="middle">FRONT</text>
<text transform="translate(971.500,99) rotate(-42) skewX(-10)" font-family="Liberation Sans" font-size="4.200" fill="#8a8a8a" text-anchor="middle">RIGHT</text>
<path d="M958.100 56.500V65" stroke="#7adf7a" stroke-width="1"/>
<text x="958.100" y="58.500" font-family="Liberation Sans" font-size="6.500" fill="#6fdc6f" text-anchor="middle">Y</text>
<path d="M937.300 102.800L940.400 99.600" stroke="#7a5ae0" stroke-width="1"/>
<text x="933.400" y="108" font-family="Liberation Sans" font-size="6.500" fill="#7a5ae0" text-anchor="middle" font-style="italic">Z</text>
<path d="M980.200 98.300L983.600 99.800" stroke="#f08a5a" stroke-width="1"/>
<text x="986.800" y="105.200" font-family="Liberation Sans" font-size="6.500" fill="#f0906a" text-anchor="middle">X</text>
</g>

</svg>

</body>
</html>
